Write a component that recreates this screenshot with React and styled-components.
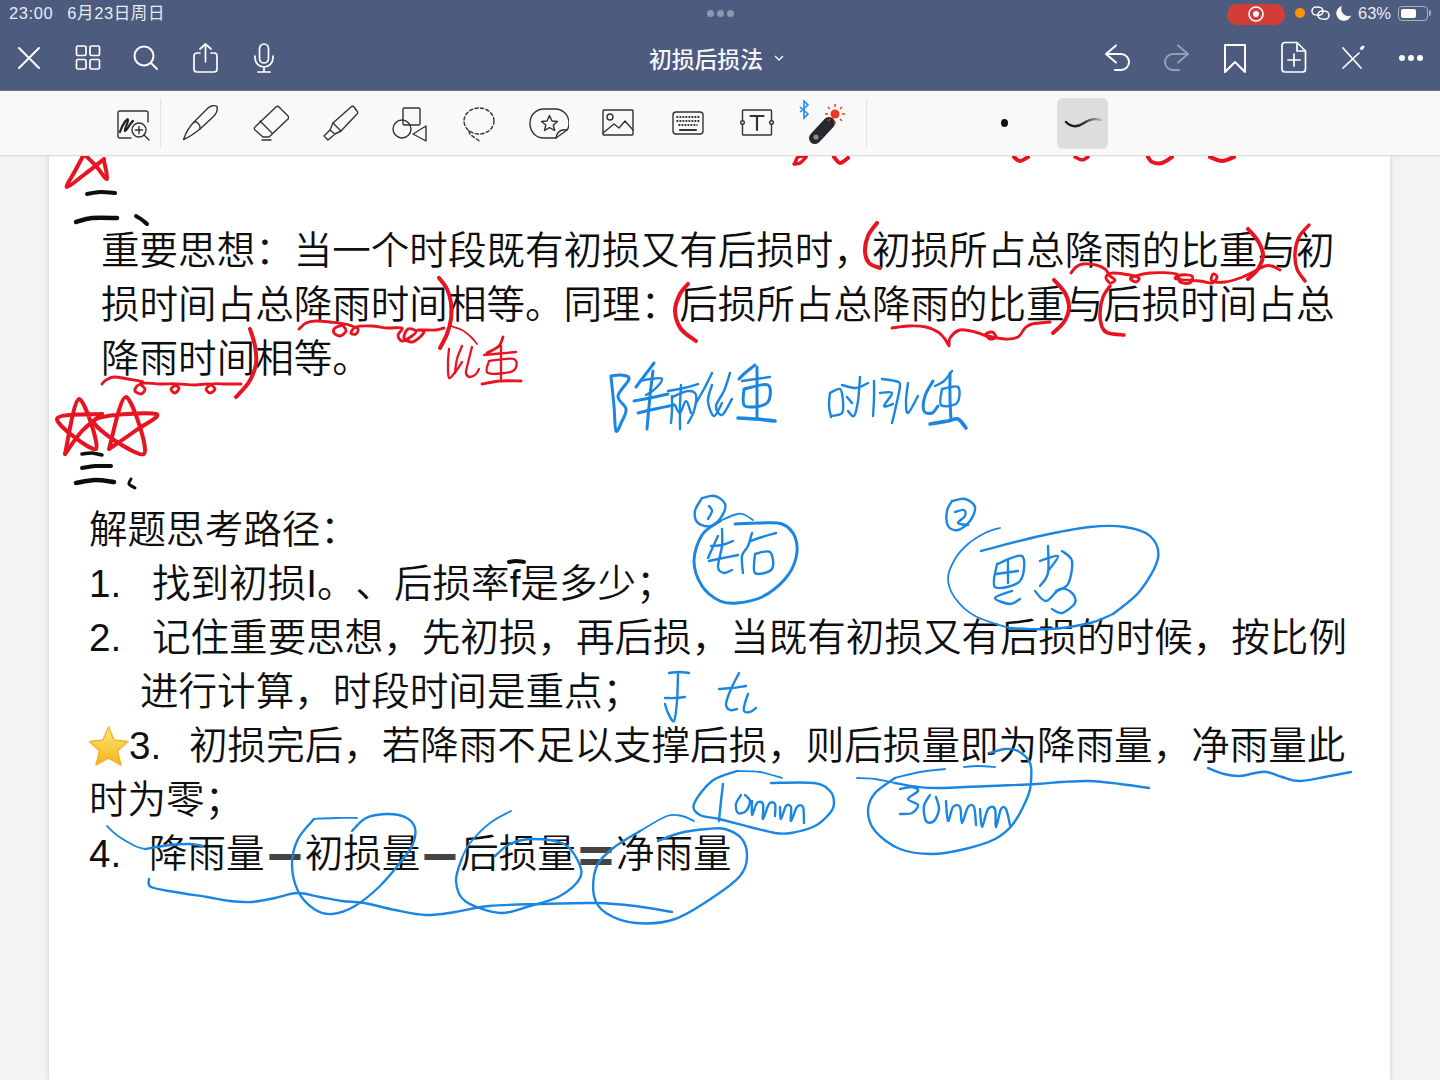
import styled, { createGlobalStyle } from "styled-components";

const GlobalStyle = createGlobalStyle`
  html, body {
    margin: 0;
    background: #f3f3f3;
    overflow: hidden;
  }
  * {
    box-sizing: border-box;
  }
  body {
    font-family: "Liberation Sans", "Noto Sans CJK SC", sans-serif;
    text-spacing-trim: space-all;
  }
`;

const Screen = styled.div`
  width: 1440px;
  height: 1080px;
  display: flex;
  flex-direction: column;
  overflow: hidden;
`;

const StatusBar = styled.div`
  height: 28px;
  background: #4c5b7e;
  color: #e9ecf3;
  display: grid;
  grid-template-columns: 1fr auto 1fr;
  align-items: center;
  padding: 0 9px 2px 9px;
  font-size: 16.5px;
  line-height: 20px;
`;

const StatusLeft = styled.div`
  display: flex;
  align-items: center;
  gap: 14px;
  letter-spacing: 0.6px;
  height: 20px;
`;

const StatusDots = styled.div`
  display: flex;
  gap: 3px;
`;

const StatusDot = styled.span`
  width: 7px;
  height: 7px;
  border-radius: 50%;
  background: #8d97b0;
`;

const StatusRight = styled.div`
  display: flex;
  justify-content: flex-end;
  align-items: center;
`;

const RecordPill = styled.div`
  width: 58px;
  height: 21px;
  margin-top: 2px;
  border-radius: 10px;
  background: #d43c38;
  display: flex;
  align-items: center;
  justify-content: center;
`;

const OrangeDot = styled.span`
  width: 10px;
  height: 10px;
  border-radius: 50%;
  background: #ff9500;
  margin-left: 10px;
`;

const StatusGlyph = styled.svg`
  fill: none;
  stroke: #fff;
  stroke-width: 1.5;
  margin-left: ${(p) => p.$gap || 0}px;
`;

const Percent = styled.span`
  margin-left: 6px;
`;

const Battery = styled.div`
  position: relative;
  width: 30px;
  height: 15px;
  margin-left: 7px;
  padding: 2px;
  border: 1px solid #a6afc5;
  border-radius: 4px;
`;

const BatteryFill = styled.div`
  height: 100%;
  width: 63%;
  background: #fff;
  border-radius: 2px;
`;

const BatteryCap = styled.span`
  width: 2px;
  height: 6px;
  margin-left: 1px;
  background: #a6afc5;
  border-radius: 0 2px 2px 0;
`;

const NavBar = styled.div`
  height: 63px;
  background: #4c5b7e;
  border-bottom: 1px solid #6f7278;
  display: flex;
  align-items: center;
  padding-bottom: 2px;
  color: #fff;
`;

const NavGroup = styled.div`
  display: flex;
  margin-left: ${(p) => p.$left || "0"};
`;

const NavCell = styled.div`
  width: 58.6px;
  display: flex;
  justify-content: center;
`;

const NavIcon = styled.svg`
  width: 32px;
  height: 32px;
  fill: none;
  stroke: #fff;
  stroke-width: 2;
  stroke-linecap: round;
  stroke-linejoin: round;
  opacity: ${(p) => p.$dim ? 0.42 : 1};
`;

const Title = styled.div`
  margin-left: 356px;
  display: flex;
  align-items: center;
  gap: 11px;
  font-size: 22.8px;
  font-weight: 500;
  font-family: "Noto Sans CJK SC", sans-serif;
  color: #f4f5f8;
`;

const Toolbar = styled.div`
  height: 65px;
  background: #f9f9f9;
  border-bottom: 1px solid #dcdcdc;
  display: flex;
  align-items: center;
  padding-left: 115px;
  box-shadow: 0 1px 2px rgba(0, 0, 0, 0.06);
  position: relative;
  z-index: 2;
`;

const Divider = styled.span`
  width: 1px;
  height: 48px;
  background: #e3e3e3;
  margin: 0 ${(p) => p.$right}px 0 ${(p) => p.$left}px;
`;

const ToolCell = styled.div`
  width: ${(p) => p.$w || "69.6px"};
  display: flex;
  justify-content: center;
`;

const ToolIcon = styled.svg`
  fill: none;
  stroke: #333;
  stroke-width: 1.4;
  stroke-linecap: round;
  stroke-linejoin: round;
`;

const SizeDot = styled.span`
  width: 7px;
  height: 8px;
  border-radius: 50%;
  background: #111;
  margin-left: 134px;
`;

const SelectedPen = styled.div`
  width: 51px;
  height: 51px;
  margin-left: 49px;
  border-radius: 6px;
  background: #dddddf;
  display: flex;
  align-items: center;
  justify-content: center;
`;

const Canvas = styled.div`
  position: relative;
  flex: 1;
  background: #f3f3f3;
  overflow: hidden;
`;

const Sheet = styled.div`
  width: 1341px;
  height: 100%;
  margin-left: 49px;
  background: #fff;
  box-shadow: 0 0 5px rgba(0, 0, 0, 0.18);
  padding-top: 68px;
  color: #0f0f0f;
  font-size: 38.56px;
  font-weight: 350;
  line-height: 54px;
`;

const Idea = styled.p`
  margin: 0 0 117px 52px;
  width: 1240px;
`;

const Steps = styled.div`
  margin-left: 40px;
  width: 1270px;
`;

const StepRow = styled.div`
  display: flex;
  padding-left: ${(p) => p.$indent || 0}px;
  white-space: nowrap;
`;

const StepNumber = styled.span`
  width: ${(p) => p.$w}px;
  display: flex;
  align-items: center;
`;

const Operator = styled.span`
  display: inline-block;
  width: 40px;
  text-align: center;
  font-weight: 900;
  color: #444;
  font-family: "Noto Sans CJK SC", sans-serif;
  transform: scale(1.15, 1.3);
`;

const InkLayer = styled.svg`
  position: absolute;
  inset: 0;
  width: 1440px;
  height: 925px;
  fill: none;
  stroke-linecap: round;
  stroke-linejoin: round;
  pointer-events: none;
`;

// freehand strokes: "x,y x,y ..." in screen coordinates, smoothed when drawn
function spline(text) {
  const pts = text.trim().split(/\s+/).map((p) => p.split(",").map(Number));
  let d = `M${pts[0][0]} ${pts[0][1]}`;
  for (let i = 0; i < pts.length - 1; i++) {
    const p0 = pts[i - 1] || pts[i];
    const p1 = pts[i];
    const p2 = pts[i + 1];
    const p3 = pts[i + 2] || p2;
    d += ` C${(p1[0] + (p2[0] - p0[0]) / 6).toFixed(1)} ${(p1[1] + (p2[1] - p0[1]) / 6).toFixed(1)} ${(p2[0] - (p3[0] - p1[0]) / 6).toFixed(1)} ${(p2[1] - (p3[1] - p1[1]) / 6).toFixed(1)} ${p2[0]} ${p2[1]}`;
  }
  return d;
}

const BLACK_INK = [
  [4, "87,193 100,191 115,192"],
  [4.5, "76,221 92,217 117,217"],
  [4, "136,215 141,218 147,223"],
  [3.5, "82,453 92,452 102,454"],
  [4, "82,467 95,465 111,465"],
  [4.5, "76,482 95,479 114,481"],
  [3, "131,478 129,483 135,487"],
  [4, "509,561 516,560 524,561"],
];

const RED_INK = [
  [3.5, "83,155 75,170 67,186 85,173 104,158"],
  [3.5, "86,155 96,165 107,178 104,160"],
  [3, "795,162 798,156 806,155"],
  [3, "794,163 800,162 806,156"],
  [3.5, "834,156 840,162 848,157"],
  [3.5, "1014,156 1020,160 1028,156"],
  [3, "1075,156 1082,159 1088,156"],
  [3.5, "1148,156 1152,161 1162,162 1172,156"],
  [3.5, "1210,156 1222,160 1234,156"],
  [3.5, "877,222 868,235 865,250 869,262 880,267"],
  [3.5, "1248,228 1258,240 1263,254 1258,268 1248,278"],
  [3, "1309,224 1299,236 1295,252 1297,268 1305,280"],
  [2.5, "1071,272 1076,266 1083,263 1096,264 1105,268 1110,275 1115,279 1110,282 1106,276 1113,272 1130,274 1139,277 1136,281 1131,277 1150,272 1176,273 1180,281 1190,282 1192,275 1181,274 1176,278 1200,280 1212,282 1217,276 1213,273 1212,280 1225,281 1240,277 1255,270 1265,265 1272,265 1280,269"],
  [2.5, "299,328 306,322 316,320 330,321 344,323 335,327 334,332 340,335 346,330 343,323 352,325 358,328 356,333 351,332 356,326 372,325 388,327 402,327 398,334 402,340 412,335 416,330 408,328 404,337 412,341 420,336 424,330 418,329 436,329 444,327"],
  [3.5, "439,277 447,288 451,302 451,318 447,333 440,347"],
  [1.5, "451,325 462,329 471,336 477,343"],
  [2, "449,348 448,362 449,377 456,370 462,361"],
  [2, "472,346 468,362 466,372 470,376 476,373 479,368"],
  [2, "462,345 457,358 455,372"],
  [2.5, "503,336 499,345 487,352"],
  [2, "484,354 516,351"],
  [2, "489,360 514,358 513,370 488,372 489,360"],
  [2, "501,345 501,378"],
  [2.5, "482,383 500,380 521,380"],
  [2.5, "102,383 106,379 114,376 128,378 143,381 137,385 135,390 141,393 145,388 141,382 160,383 175,383 171,388 175,392 179,387 174,383 195,384 210,383 206,388 210,392 215,388 212,383 226,383 241,383"],
  [3.5, "250,328 255,345 256,363 249,381 236,396"],
  [3.5, "688,283 680,293 675,310 681,328 696,340"],
  [3.5, "1054,279 1065,292 1069,307 1064,321 1053,332"],
  [3, "1110,285 1103,296 1100,312 1102,326 1108,332 1124,334"],
  [2.5, "892,327 908,325 926,326 938,331 945,338 949,345 950,337 960,329 975,331 986,335 990,338 996,336 992,331 986,334 1005,338 1018,336 1025,327 1032,323 1050,321"],
  [3.5, "65,453 79,398 96,448 57,418 102,413"],
  [3.5, "102,413 82,430 65,453"],
  [3.5, "109,448 126,396 144,453 94,420 156,413 135,430 109,448"],
];

const BLUE_INK = [
  // 降雨比重
  [2.5, "611,375 621,374 629,378 618,395 626,408 622,420 616,430 614,405 611,376"],
  [2.5, "654,362 645,374 636,386"],
  [2, "640,380 650,378 662,378 655,388 646,394"],
  [2.5, "634,400 650,397 668,393"],
  [2.5, "638,412 655,408 674,404"],
  [2.5, "653,370 650,395 647,428"],
  [2, "668,390 684,387 698,383"],
  [2, "672,395 672,410 671,422"],
  [2, "672,396 688,390 696,394 694,410 688,422"],
  [2, "681,384 680,405 680,428"],
  [2, "675,404 680,412 686,400 691,412"],
  [2, "712,372 704,388 696,402"],
  [2, "712,384 708,400 714,415 722,402"],
  [2, "730,372 724,390 716,405 722,414 732,398"],
  [2.5, "755,364 745,372 739,378"],
  [2, "742,380 756,378 770,376"],
  [2.5, "744,388 768,384 767,402 745,405 744,388"],
  [2.5, "757,366 757,388 757,416"],
  [3, "738,417 756,418 775,420"],
  // 时间比重
  [2, "830,392 829,405 831,416"],
  [2, "830,392 840,388 843,400 842,412 832,415"],
  [2, "842,384 856,387 868,382"],
  [2, "860,376 858,400 854,415 848,410"],
  [2, "847,396 852,402"],
  [2, "874,380 874,398 873,415"],
  [2, "882,378 895,380 900,384 896,405 892,422"],
  [2, "880,392 892,392 884,405 893,403"],
  [2, "908,382 906,400 908,412 918,395"],
  [2.5, "933,380 925,395 924,410 932,412 938,405"],
  [2, "952,370 944,380 935,385"],
  [2, "942,388 958,386 957,402 941,404 942,388"],
  [2.5, "950,372 950,398 951,418"],
  [3, "930,423 948,420 958,418 966,427"],
  // circled marks
  [2, "702,497 715,495 725,503 722,515 711,525 698,522 695,510 702,497"],
  [2, "709,505 712,510 708,518"],
  [2, "952,500 965,498 975,506 970,520 958,529 948,525 947,510 952,500"],
  [2, "955,511 964,509 965,515 958,522 968,524"],
  [1.5, "753,519 745,514 737,513 720,520"],
  [2.5, "720,520 702,534 694,560 702,585 720,600 737,602 762,596 785,578 796,557 795,536 782,523 760,522 735,523"],
  // 先后
  [2, "718,535 712,548 708,557"],
  [2, "711,545 722,544 733,540"],
  [2, "709,560 723,557 738,554"],
  [2, "722,528 722,545 718,566 724,572 732,569"],
  [2, "752,532 748,545 742,555 743,572"],
  [2, "751,540 762,536 776,532"],
  [2, "755,553 770,551 772,568 755,572 755,553"],
  [1.5, "1000,527 985,532 968,543 955,558 948,577 955,597 975,615 1009,627"],
  [2, "1009,627 1050,628 1090,622 1113,613"],
  [2, "1113,613 1140,590 1158,557 1150,535 1125,526 1090,526 1040,535 981,550"],
  // 思想
  [2, "997,563 1022,555 1020,580 995,586 997,563"],
  [2, "1008,560 1008,582"],
  [2, "996,573 1018,570"],
  [2, "1012,590 995,597 1010,603 1020,598"],
  [2, "1040,560 1058,555 1048,570"],
  [2, "1048,545 1048,572 1040,585"],
  [2, "1062,550 1072,560 1068,583 1056,590"],
  [2, "1035,590 1046,600 1060,588 1072,592 1075,602 1062,612 1052,608"],
  // F tc
  [2, "669,672 679,671 689,672"],
  [2, "665,697 675,697 685,696"],
  [2, "678,673 677,700 674,720 668,712 665,703"],
  [2, "739,672 731,688 726,703 730,709 737,708"],
  [2, "719,688 732,687 746,685"],
  [2, "748,693 745,702 744,710 750,711 756,707"],
  // long strokes
  [2, "1208,767 1224,773 1240,775 1255,772 1267,771 1282,776 1299,780 1325,776 1351,771"],
  [1.5, "857,777 875,778 895,782"],
  [2, "895,782 918,786 941,787 990,785 1036,783 1062,781 1090,780 1120,783 1149,787"],
  // 10mm
  [1.5, "782,777 760,771 737,770"],
  [2, "737,770 712,780 694,803 700,814 719,818 750,826 775,832 791,832 815,825 830,812 834,802 830,790 814,782 771,782"],
  [2, "723,783 721,800 719,820"],
  [2, "741,794 736,803 738,812 746,810 750,800 745,794"],
  [2, "752,800 752,814 757,802 763,803 763,818 769,803 775,803 775,815"],
  [2, "780,806 781,818 786,805 791,806 791,820 797,806 803,806 804,822"],
  // 30mm
  [1.5, "945,768 920,771 895,777"],
  [2, "895,777 875,792 868,810 875,830 900,848 932,853 965,848 995,838 1013,823 1028,795 1031,780 1030,762 1018,750 1005,748 990,752"],
  [1.5, "964,766 978,765 995,766"],
  [2, "900,788 912,786 918,790 908,798 918,804 912,812 900,813"],
  [2, "930,794 924,805 926,820 934,820 939,808 936,796"],
  [2, "946,800 948,820 953,806 960,806 962,822 968,806 974,806 976,824"],
  [2, "980,808 982,826 988,808 995,808 996,826 1001,808 1006,808 1010,824"],
  // 4. line
  [1.5, "107,825 118,835 135,845 145,848"],
  [2, "145,848 170,844 190,843 203,845"],
  [2, "149,878 151,886 175,891 207,896 230,900 252,901 275,897 297,892 320,896 342,900 364,902 395,909 426,914 455,911 489,905 540,903 596,902 635,905 672,911"],
  [1.5, "357,817 335,817 314,818"],
  [2, "314,818 298,838 292,863 298,890 314,908 332,913 355,905 380,885 399,863 412,845 415,827 405,816 386,813 366,817 352,830"],
  [1.5, "511,810 490,822 470,842 462,857"],
  [2, "462,857 456,880 465,900 500,912 530,905 560,895 580,877 578,860 564,843 533,838 510,843 495,855"],
  [1.5, "694,820 682,815 667,815 640,830"],
  [2, "640,830 612,848 596,867 594,895 606,912 636,922 675,918 715,895 740,875 747,857 742,838 725,828 707,828 680,832 658,840"],
];

function InkStrokes({ color, strokes, weight = 1 }) {
  return (
    <g stroke={color}>
      {strokes.map(([w, pts], i) => (
        <path key={i} d={spline(pts)} strokeWidth={w * weight} />
      ))}
    </g>
  );
}

function StarBadge() {
  return (
    <svg width="40" height="40" viewBox="0 0 40 40" style={{ flex: "none" }}>
      <defs>
        <linearGradient id="starFill" x1="0" y1="0" x2="0" y2="1">
          <stop offset="0" stopColor="#ffe97a" />
          <stop offset="1" stopColor="#f7b21c" />
        </linearGradient>
      </defs>
      <path
        d="M19.5 1 L25 14 L39 15.5 L28.5 25 L32 39 L19.5 32 L7 39 L10.5 25 L0.5 15.5 L14 14 Z"
        fill="url(#starFill)"
        stroke="#f2b330"
        strokeWidth="1.5"
        strokeLinejoin="round"
      />
    </svg>
  );
}

export default function App() {
  return (
    <Screen>
      <GlobalStyle />
      <StatusBar>
        <StatusLeft>
          <span>23:00</span>
          <span>6月23日周日</span>
        </StatusLeft>
        <StatusDots>
          <StatusDot />
          <StatusDot />
          <StatusDot />
        </StatusDots>
        <StatusRight>
          <RecordPill>
            <svg width="18" height="18" viewBox="0 0 18 18">
              <circle cx="9" cy="9" r="7" fill="none" stroke="#fff" strokeWidth="1.6" />
              <circle cx="9" cy="9" r="3" fill="#fff" />
            </svg>
          </RecordPill>
          <OrangeDot />
          <StatusGlyph $gap={6} width="19" height="14" viewBox="0 0 19 14">
            <rect x="1" y="1" width="11" height="8" rx="4" transform="rotate(6 6 5)" />
            <rect x="7" y="5" width="11" height="8" rx="4" transform="rotate(6 12 9)" />
          </StatusGlyph>
          <StatusGlyph $gap={6} width="16" height="16" viewBox="0 0 16 16" style={{ fill: "#fff", stroke: "none" }}>
            <path d="M6 1 A7.5 7.5 0 1 0 15 10.5 A7 7 0 0 1 6 1 Z" />
          </StatusGlyph>
          <Percent>63%</Percent>
          <Battery>
            <BatteryFill />
          </Battery>
          <BatteryCap />
        </StatusRight>
      </StatusBar>

      <NavBar>
        <NavGroup>
          <NavCell>
            <NavIcon viewBox="0 0 32 32">
              <path d="M6 6 L26 26 M26 6 L6 26" />
            </NavIcon>
          </NavCell>
          <NavCell>
            <NavIcon viewBox="0 0 32 32" style={{ strokeWidth: 1.7 }}>
              <rect x="4.5" y="4" width="9.5" height="9.5" rx="1.5" />
              <rect x="18" y="4" width="9.5" height="9.5" rx="1.5" />
              <rect x="4.5" y="17.5" width="9.5" height="9.5" rx="1.5" />
              <rect x="18" y="17.5" width="9.5" height="9.5" rx="1.5" />
            </NavIcon>
          </NavCell>
          <NavCell>
            <NavIcon viewBox="0 0 32 32">
              <circle cx="14" cy="14" r="9.5" />
              <path d="M21 21 L27 27" />
            </NavIcon>
          </NavCell>
          <NavCell>
            <NavIcon viewBox="0 0 32 32" style={{ strokeWidth: 1.7 }}>
              <path d="M11 11 H8 a3 3 0 0 0 -3 3 V27 a3 3 0 0 0 3 3 H25 a3 3 0 0 0 3 -3 V14 a3 3 0 0 0 -3 -3 H22" />
              <path d="M16.5 2 V20 M11 7 L16.5 2 L22 7" />
            </NavIcon>
          </NavCell>
          <NavCell>
            <NavIcon viewBox="0 0 32 32" style={{ strokeWidth: 1.7 }}>
              <rect x="11.5" y="2" width="9" height="19" rx="4.5" />
              <path d="M7 14 v2 a9 9 0 0 0 18 0 v-2 M16 25 V30 M10 30 H22" />
            </NavIcon>
          </NavCell>
        </NavGroup>

        <Title>
          初损后损法
          <svg width="10" height="7" viewBox="0 0 10 7" fill="none" stroke="#fff" strokeWidth="1.3">
            <path d="M1 1 L5 5 L9 1" />
          </svg>
        </Title>

        <NavGroup $left="auto">
          <NavCell>
            <NavIcon viewBox="0 0 32 32">
              <path d="M4 12 H19 a8 8 0 0 1 0 16 H13 M14 3.5 L4 12 L14 20.5" />
            </NavIcon>
          </NavCell>
          <NavCell>
            <NavIcon $dim viewBox="0 0 32 32">
              <path d="M28 12 H13 a8 8 0 0 0 0 16 H19 M18 3.5 L28 12 L18 20.5" />
            </NavIcon>
          </NavCell>
          <NavCell>
            <NavIcon viewBox="0 0 32 32">
              <path d="M6 30 V3 H26 V30 L16 20 Z" />
            </NavIcon>
          </NavCell>
          <NavCell>
            <NavIcon viewBox="0 0 32 32" style={{ strokeWidth: 1.7, overflow: "visible" }}>
              <path d="M7 0.5 H19 L27.5 9 V27 a3 3 0 0 1 -3 3 H7 a3 3 0 0 1 -3 -3 V3.5 a3 3 0 0 1 3 -3 Z" />
              <path d="M19 1 V9 H27 M16 12 V24 M10 18 H22" />
            </NavIcon>
          </NavCell>
          <NavCell>
            <NavIcon viewBox="0 0 32 32" style={{ strokeWidth: 1.7 }}>
              <path d="M7 6 L25 26 M23 11 L7 26" />
              <path d="M25.5 6.5 L27 5" strokeWidth="3" />
            </NavIcon>
          </NavCell>
          <NavCell>
            <NavIcon viewBox="0 0 32 32" style={{ stroke: "none", fill: "#fff" }}>
              <circle cx="7" cy="16" r="3" />
              <circle cx="16" cy="16" r="3" />
              <circle cx="25" cy="16" r="3" />
            </NavIcon>
          </NavCell>
        </NavGroup>
      </NavBar>

      <Toolbar>
        <ToolIcon width="36" height="36" viewBox="0 0 36 36">
          <path d="M16 33 H5 a2 2 0 0 1 -2 -2 V8 a2 2 0 0 1 2 -2 H31 a2 2 0 0 1 2 2 V17" />
          <path d="M5 27 C8 18 13 12 13 15 C13 19 9 24 10 26 C12 26 15 18 18 16" strokeWidth="2.2" stroke="#222" />
          <circle cx="24" cy="25" r="7" />
          <path d="M29 30 L34 35 M24 21.5 V28.5 M20.5 25 H27.5" />
        </ToolIcon>
        <Divider $left={9} $right={5} />
        <ToolCell>
          <ToolIcon width="38" height="38" viewBox="0 0 38 38">
            <path d="M1.5 35.5 C4 28 8 22 12 18 L26 4 C29 1.5 33 1 35 2.5 C36 6 34 10 31 13 L18 25 C13 29 8 33 1.5 35.5 Z" />
            <path d="M12 18 C15 17 19 21 18 25" />
          </ToolIcon>
        </ToolCell>
        <ToolCell>
          <ToolIcon width="38" height="38" viewBox="-2 0 38 38">
            <path d="M23 3 a2 2 0 0 1 3 0 L35 12 a2 2 0 0 1 0 3 L16 33 H10 L2 26 a2 2 0 0 1 0 -3 Z" />
            <path d="M7 17 L19 29 M9 36 H18" />
          </ToolIcon>
        </ToolCell>
        <ToolCell>
          <ToolIcon width="38" height="38" viewBox="-1 0 38 38">
            <path d="M29 3 a2 2 0 0 1 3 0 L35 7 a2 2 0 0 1 0 3 L19 27 L11 19 Z" />
            <path d="M11 19 L8 26 L13 30 L19 27 M8 26 L2 32 L6 36 L13 30" />
          </ToolIcon>
        </ToolCell>
        <ToolCell>
          <ToolIcon width="38" height="38" viewBox="-1 -1 38 38">
            <rect x="11" y="3" width="17" height="17" rx="1.5" />
            <circle cx="10" cy="24" r="9" />
            <path d="M34 21 L21 29 L34 36 Z" />
          </ToolIcon>
        </ToolCell>
        <ToolCell>
          <ToolIcon width="38" height="38" viewBox="-1 -2 38 38">
            <ellipse cx="18" cy="15" rx="15" ry="13" strokeDasharray="3.2 2.4" />
            <path d="M8 25 C8 30 15 31 19 36" strokeDasharray="3.2 2.4" />
          </ToolIcon>
        </ToolCell>
        <ToolCell>
          <ToolIcon width="40" height="40" viewBox="0 0 40 40">
            <path d="M27 35 H15 C7 35 1 29 1 20.5 C1 12 7 6 15 6 H26 C34 6 40 12 40 20.5 C40 24 39 26 38 27 Z" />
            <path d="M38 27 C32 26 28 29 27 35" />
            <path d="M20.5 12.5 L23 18 L28.5 18.5 L24.3 22 L25.7 27.5 L20.5 24.7 L15.5 27.5 L16.8 22 L12.5 18.5 L18 18 Z" />
          </ToolIcon>
        </ToolCell>
        <ToolCell>
          <ToolIcon width="36" height="36" viewBox="0 0 36 36">
            <rect x="3" y="5" width="30" height="25" rx="1" />
            <circle cx="10" cy="12" r="3" />
            <path d="M3 28 L14 19 L19 23 L25 16 L33 25" />
          </ToolIcon>
        </ToolCell>
        <ToolCell>
          <ToolIcon width="36" height="36" viewBox="0 0 36 36">
            <rect x="3" y="7" width="30" height="22" rx="3" />
            <path d="M6.5 12 H29.5 M6.5 16 H29.5 M8.5 20 H27.5" strokeWidth="2.2" strokeDasharray="1.8 1.2" strokeLinecap="butt" />
            <path d="M10 25 H26" strokeWidth="2.2" />
          </ToolIcon>
        </ToolCell>
        <ToolCell>
          <ToolIcon width="36" height="36" viewBox="1 0 36 36">
            <rect x="3.5" y="5" width="29" height="25" rx="1" />
            <circle cx="3.5" cy="17.5" r="1.8" fill="#f9f9f9" />
            <circle cx="32.5" cy="17.5" r="1.8" fill="#f9f9f9" />
            <path d="M11.5 11 H24.5 M18 11 V25" strokeWidth="2.2" />
          </ToolIcon>
        </ToolCell>
        <ToolCell $w="60px">
          <svg width="50" height="46" viewBox="0 0 50 46" fill="none">
            <path d="M3 7 L11 14 L7 18 V1 L11 5 L3 12" stroke="#1c8fe8" strokeWidth="1.6" />
            <path d="M32 23 L18 38" stroke="#26282c" strokeWidth="12" strokeLinecap="round" />
            <circle cx="19" cy="37" r="2.6" fill="#8a8c90" />
            <circle cx="38" cy="14" r="4.5" fill="#f4341f" />
            <path d="M38 4 V7 M38 21 V24 M28 14 H31 M45 14 H48 M31 7 L33 9 M45 7 L43 9 M45 21 L43 19 M31 21 L33 19" stroke="#f4341f" strokeWidth="1.4" />
          </svg>
        </ToolCell>
        <Divider $left={14} $right={0} />
        <SizeDot />
        <SelectedPen>
          <svg width="40" height="20" viewBox="0 0 40 20" fill="none">
            <defs>
              <linearGradient id="penFade" x1="0" y1="0" x2="1" y2="0">
                <stop offset="0" stopColor="#111" />
                <stop offset="0.55" stopColor="#333" />
                <stop offset="1" stopColor="#bbb" />
              </linearGradient>
            </defs>
            <path d="M3 9 C9 15 15 14 21 10 C27 6 32 5 38 7" stroke="url(#penFade)" strokeWidth="2.4" strokeLinecap="round" />
          </svg>
        </SelectedPen>
      </Toolbar>

      <Canvas>
        <Sheet>
          <Idea>
            重要思想：当一个时段既有初损又有后损时，初损所占总降雨的比重与初损时间占总降雨时间相等。同理：后损所占总降雨的比重与后损时间占总降雨时间相等。
          </Idea>
          <Steps>
            <StepRow>解题思考路径：</StepRow>
            <StepRow>
              <StepNumber $w={63}>1.</StepNumber>
              找到初损I。、后损率f是多少；
            </StepRow>
            <StepRow>
              <StepNumber $w={63}>2.</StepNumber>
              记住重要思想，先初损，再后损，当既有初损又有后损的时候，按比例
            </StepRow>
            <StepRow $indent={51}>进行计算，时段时间是重点；</StepRow>
            <StepRow>
              <StepNumber $w={100}>
                <StarBadge />
                3.
              </StepNumber>
              初损完后，若降雨不足以支撑后损，则后损量即为降雨量，净雨量此
            </StepRow>
            <StepRow>时为零；</StepRow>
            <StepRow>
              <StepNumber $w={60}>4.</StepNumber>
              降雨量<Operator>－</Operator>初损量<Operator>－</Operator>后损量<Operator>＝</Operator>净雨量
            </StepRow>
          </Steps>
        </Sheet>
        <InkLayer viewBox="0 155 1440 925">
          <InkStrokes color="#0d0d0d" strokes={BLACK_INK} />
          <InkStrokes color="#e8141f" strokes={RED_INK} weight={1.15} />
          <InkStrokes color="#1b86e2" strokes={BLUE_INK} weight={1.2} />
        </InkLayer>
      </Canvas>
    </Screen>
  );
}
